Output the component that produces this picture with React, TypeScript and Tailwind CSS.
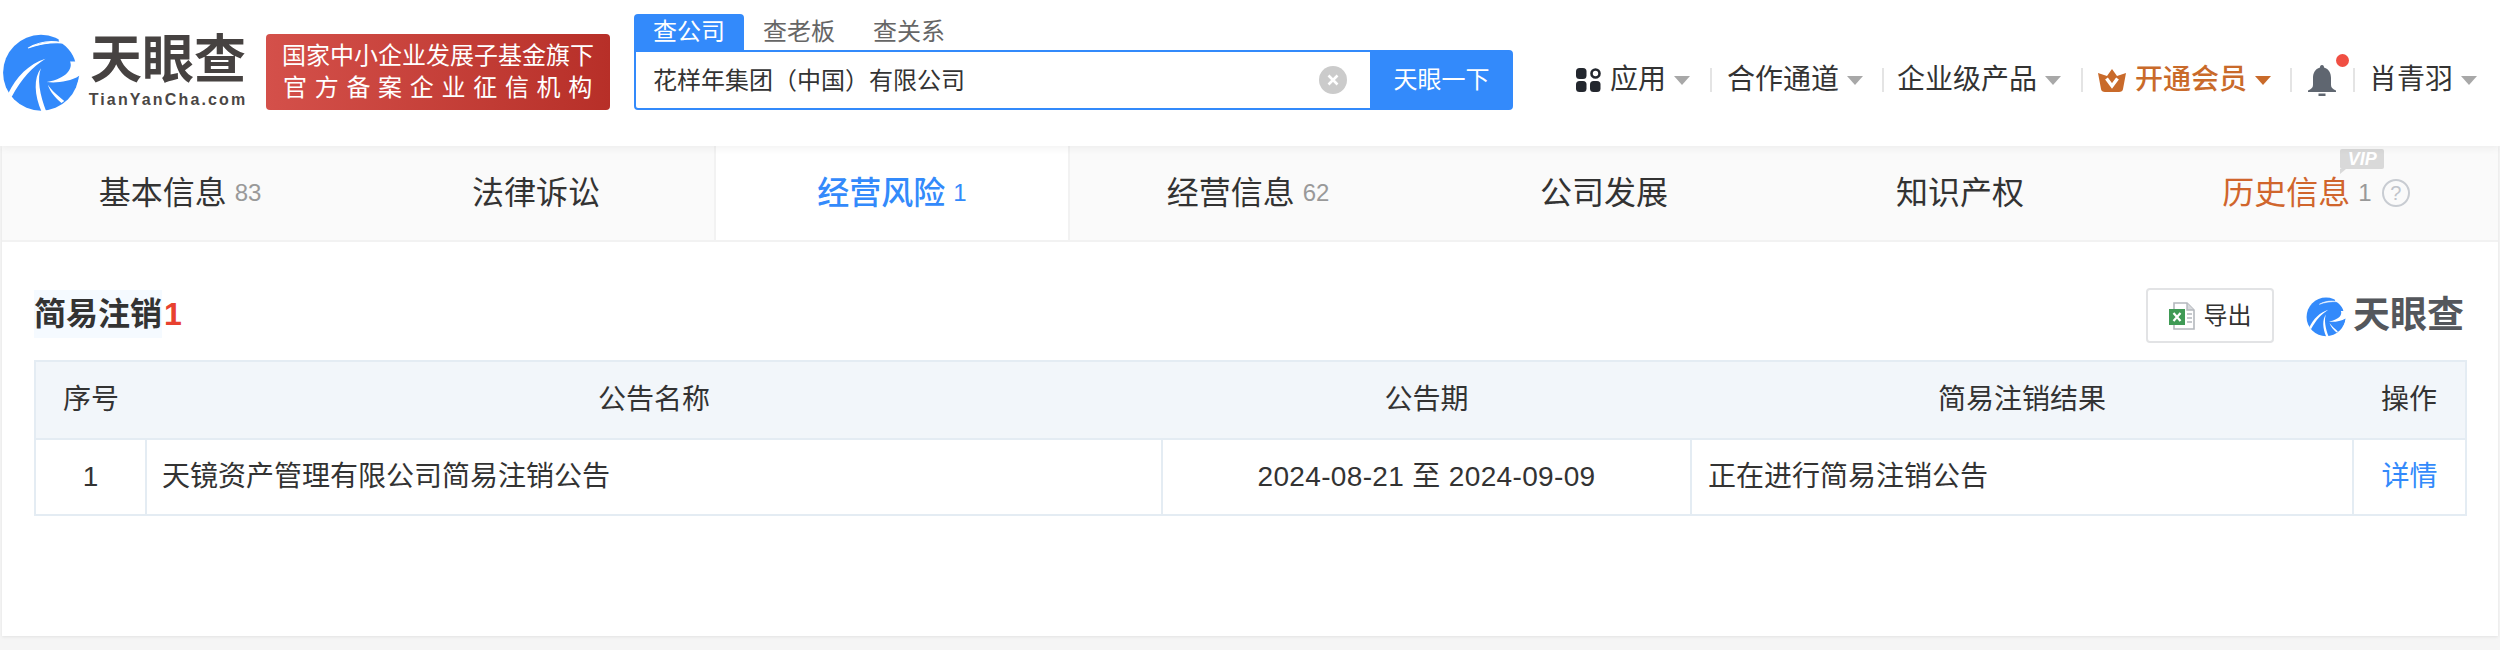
import React from 'react';

function EyeLogo({ className }: { className: string }) {
  return (
    <svg viewBox="0 0 240 240" className={className}>
      <circle cx="120" cy="125" r="111" fill="#338afb" />
      {/* upper right notch of the eagle head */}
      <path d="M172 20 L240 20 L240 108 L222 104 C220 78 202 50 172 34Z" fill="#fff" />
      <path d="M82 53 C112 36 150 30 182 38 C150 36 112 42 82 53Z" fill="#fff" stroke="#fff" strokeWidth="3" />
      <path d="M24 186 C48 136 84 100 133 84 C96 108 62 142 34 196Z" fill="#fff" />
      <path d="M205 92 C214 112 196 142 137 152 C152 160 196 160 240 136 L240 100 L222 92Z" fill="#fff" />
      <path d="M137 152 C160 156 205 152 232 134 C222 172 205 194 186 206 C168 186 150 168 137 152Z" fill="#338afb" />
      <path d="M120 112 C108 140 116 190 136 240 L122 240 C100 190 98 140 120 112Z" fill="#fff" />
      <path d="M140 160 C150 176 170 192 188 208 L180 214 C162 198 146 180 140 160Z" fill="#fff" />
    </svg>
  );
}

function Caret({ color = 'border-t-[#a8a8a8]' }: { color?: string }) {
  return <span className={`ml-[8px] h-0 w-0 border-x-[8px] border-t-[9px] border-x-transparent ${color}`} />;
}

function Sep({ className }: { className: string }) {
  return <span className={`h-[24px] w-[2px] bg-[#e4e4e4] ${className}`} />;
}

function NavBar() {
  return (
    <div className="ml-[63px] mt-[58px] flex h-[44px] items-center text-[28px] leading-[44px] text-[#333]">
      <svg viewBox="0 0 25 24" className="h-[24px] w-[25px]">
        <rect x="0" y="0" width="10.5" height="11" rx="3.5" fill="#23272e" />
        <circle cx="19.5" cy="5.5" r="4" fill="none" stroke="#23272e" strokeWidth="2.6" />
        <rect x="0" y="13" width="10.5" height="11" rx="3.5" fill="#23272e" />
        <rect x="14" y="13" width="10.5" height="11" rx="3.5" fill="#23272e" />
      </svg>
      <span className="ml-[9px]">应用</span>
      <Caret />
      <Sep className="ml-[20px] mr-[15px]" />
      <span>合作通道</span>
      <Caret />
      <Sep className="ml-[19px] mr-[13px]" />
      <span>企业级产品</span>
      <Caret />
      <Sep className="ml-[20px] mr-[15px]" />
      <svg viewBox="0 0 28 23" className="h-[23px] w-[28px]">
        <path d="M14 0 L19 7 L28 4 L25 20 C25 22 23 23 21 23 L7 23 C5 23 3 22 3 20 L0 4 L9 7Z" fill="#c96a2a" />
        <path d="M8.5 9.5 L14 17 L19.5 9.5" fill="none" stroke="#fff" strokeWidth="3.4" />
      </svg>
      <span className="ml-[9px] font-medium text-[#c96a2a]">开通会员</span>
      <Caret color="border-t-[#c96a2a]" />
      <Sep className="ml-[19px] mr-[16px]" />
      <span className="relative h-[30px] w-[28px]">
        <svg viewBox="0 0 28 31" className="h-[31px] w-[28px]">
          <path d="M14 0 C15.5 0 16 1 16 2.5 C21 4 23 8 23 13 L23 20 C23 23 25 24 28 25.5 L28 27 L0 27 L0 25.5 C3 24 5 23 5 20 L5 13 C5 8 7 4 12 2.5 C12 1 12.5 0 14 0Z" fill="#5f6670" />
          <rect x="10.5" y="28.5" width="7" height="2.5" fill="#5f6670" />
        </svg>
        <span className="absolute left-[28px] top-[-11px] h-[13px] w-[13px] rounded-full bg-[#f04f43]" />
      </span>
      <Sep className="ml-[17px] mr-[14px]" />
      <span>肖青羽</span>
      <Caret />
    </div>
  );
}

function Header() {
  return (
    <header className="relative z-10 flex h-[146px] items-start bg-white shadow-[0_2px_8px_rgba(0,0,0,0.06)]">
      <EyeLogo className="mt-[30px] h-[82px] w-[82px] shrink-0" />
      <div className="ml-[7px] mt-[30px] flex w-[158px] flex-col items-center text-[#464241]">
        <div className="whitespace-nowrap text-[52px] font-bold leading-[60px]">天眼查</div>
        <div className="mt-[1px] whitespace-nowrap text-[16px] font-bold leading-[18px] tracking-[2.15px] text-[#4a4644]">TianYanCha.com</div>
      </div>
      <div className="ml-[19px] mt-[34px] flex h-[76px] w-[344px] flex-col items-center justify-center rounded-[4px] bg-linear-to-r from-[#d4504a] to-[#b72f28] text-[24px] leading-[32px] text-white">
        <div className="whitespace-nowrap">国家中小企业发展子基金旗下</div>
        <div className="whitespace-nowrap tracking-[7.7px] pl-[7px]">官方备案企业征信机构</div>
      </div>
      <div className="ml-[24px] mt-[14px] w-[879px] shrink-0">
        <div className="flex h-[36px] text-[24px] leading-[36px] text-[#666]">
          <span className="w-[110px] rounded-t-[4px] bg-[#338afb] text-center text-white">查公司</span>
          <span className="w-[110px] text-center">查老板</span>
          <span className="w-[110px] text-center">查关系</span>
        </div>
        <div className="flex h-[60px] rounded-[4px] rounded-tl-none border-2 border-[#338afb]">
          <div className="flex flex-1 items-center pl-[17px] pr-[23px] text-[24px] text-[#333]">
            <span className="flex-1 pt-[2px]">花样年集团（中国）有限公司</span>
            <svg viewBox="0 0 28 28" className="h-[28px] w-[28px]">
              <circle cx="14" cy="14" r="14" fill="#cbcbcb" />
              <path d="M9.5 9.5 L18.5 18.5 M18.5 9.5 L9.5 18.5" stroke="#fff" strokeWidth="2.6" />
            </svg>
          </div>
          <button className="w-[141px] bg-[#338afb] pl-[2px] text-[24px] text-white">天眼一下</button>
        </div>
      </div>
      <NavBar />
    </header>
  );
}

const tabs = [
  { label: '基本信息', count: '83' },
  { label: '法律诉讼' },
  { label: '经营风险', count: '1', active: true },
  { label: '经营信息', count: '62' },
  { label: '公司发展' },
  { label: '知识产权' },
  { label: '历史信息', count: '1', vip: true },
];

function Tabs() {
  return (
    <div className="grid h-[96px] grid-cols-[repeat(7,356px)] border-b-2 border-[#f2f2f2] bg-[#fafafa]">
      {tabs.map((tab) => (
        <div
          key={tab.label}
          className={`flex h-full items-center justify-center text-[32px] text-[#333] ${tab.active ? 'border-x-2 border-[#f2f2f2] bg-white' : ''}`}
        >
          <span className={`relative ${tab.active ? 'font-medium text-[#338afb]' : ''} ${tab.vip ? 'text-[#d0652c]' : ''}`}>
            {tab.label}
            {tab.vip && (
              <span className="absolute left-[118px] top-[-20px] h-[20px] w-[44px] rounded-[2px] bg-[#d9d9d9] text-center text-[18px] font-bold italic leading-[20px] text-white">
                VIP
                <span className="absolute left-0 top-[20px] h-0 w-0 border-r-[6px] border-t-[5px] border-r-transparent border-t-[#d9d9d9]" />
              </span>
            )}
          </span>
          {tab.count && (
            <span className={`ml-[8px] text-[24px] ${tab.active ? 'text-[#338afb]' : 'text-[#999]'}`}>{tab.count}</span>
          )}
          {tab.vip && (
            <span className="ml-[10px] flex h-[28px] w-[28px] items-center justify-center rounded-full border-2 border-[#c8ccd2] text-[20px] leading-none text-[#c0c4ca]">?</span>
          )}
        </div>
      ))}
    </div>
  );
}

function TitleRow() {
  return (
    <div className="mt-[46px] flex h-[55px] items-center justify-between pl-[32px] pr-[34px]">
      <h2 className="-mt-[4px] flex items-center text-[32px] font-bold leading-[48px] text-[#333]">
        <span className="bg-[#f5faff]">简易注销</span>
        <span className="ml-[2px] font-['Liberation_Sans'] text-[#e8412f]">1</span>
      </h2>
      <div className="flex items-center">
        <button className="flex h-[55px] w-[128px] items-center justify-center rounded-[4px] border-2 border-[#e2e3e5] text-[24px] text-[#333]">
          <svg viewBox="0 0 26 28" className="mr-[9px] h-[28px] w-[26px]">
            <path d="M5 1 H18 L25 8 V27 H5Z" fill="#fff" stroke="#b4b8bd" strokeWidth="1.6" />
            <path d="M18 1 V8 H25" fill="#d8dadd" stroke="#b4b8bd" strokeWidth="1.4" />
            <path d="M18 12 H23 M18 16 H23 M18 20 H23" stroke="#b4b8bd" strokeWidth="1.6" />
            <rect x="0" y="7" width="16" height="16" fill="#3f9a55" />
            <path d="M4.5 11 L11.5 19 M11.5 11 L4.5 19" stroke="#fff" strokeWidth="2.2" />
          </svg>
          导出
        </button>
        <EyeLogo className="ml-[31px] h-[42px] w-[42px]" />
        <span className="ml-[6px] text-[37px] font-bold leading-[42px] text-[#54575c]">天眼查</span>
      </div>
    </div>
  );
}

function ResultTable() {
  return (
    <div className="px-[32px] pt-[17px]">
      <table className="w-[2431px] table-fixed border-collapse text-[28px] text-[#333]">
        <colgroup>
          <col className="w-[111px]" />
          <col className="w-[1016px]" />
          <col className="w-[529px]" />
          <col className="w-[662px]" />
          <col className="w-[113px]" />
        </colgroup>
        <thead>
          <tr className="h-[78px] bg-[#f2f6fa]">
            <th className="border-y-2 border-l-2 border-[#e4ecf3] font-normal">序号</th>
            <th className="border-y-2 border-[#e4ecf3] font-normal">公告名称</th>
            <th className="border-y-2 border-[#e4ecf3] font-normal">公告期</th>
            <th className="border-y-2 border-[#e4ecf3] font-normal">简易注销结果</th>
            <th className="border-y-2 border-r-2 border-[#e4ecf3] font-normal">操作</th>
          </tr>
        </thead>
        <tbody>
          <tr className="h-[76px]">
            <td className="border-2 border-[#e4ecf3] text-center">1</td>
            <td className="border-2 border-[#e4ecf3] pl-[15px]">天镜资产管理有限公司简易注销公告</td>
            <td className="border-2 border-[#e4ecf3] text-center tracking-[0.35px]">2024-08-21 至 2024-09-09</td>
            <td className="border-2 border-[#e4ecf3] pl-[16px]">正在进行简易注销公告</td>
            <td className="border-2 border-[#e4ecf3] text-center text-[#338afb]">详情</td>
          </tr>
        </tbody>
      </table>
    </div>
  );
}

export default function App() {
  return (
    <div className="h-[650px] overflow-hidden bg-[#f5f5f5] font-['Liberation_Sans','Noto_Sans_CJK_SC',sans-serif]">
      <Header />
      <main className="mx-[2px] h-[490px] bg-white shadow-[0_1px_3px_rgba(0,0,0,0.08)]">
        <Tabs />
        <TitleRow />
        <ResultTable />
      </main>
    </div>
  );
}
